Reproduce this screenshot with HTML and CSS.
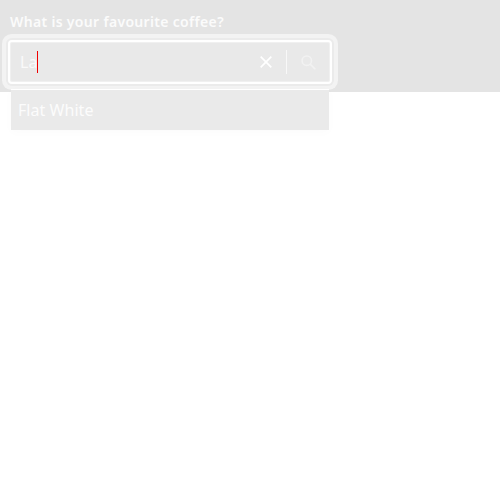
FILE: index.html
```html
<!DOCTYPE html>
<html lang="en">
<head>
<meta charset="utf-8">
<title>Coffee</title>
<link rel="stylesheet" href="styles.css">
</head>
<body>
<div class="panel">
  <div class="label">What is your favourite coffee?</div>
  <div class="field">
    <span class="value">La</span><span class="caret"></span>
    <svg class="clear" width="12" height="12" viewBox="0 0 12 12"><path d="M.7 .7 11.3 11.3M11.3 .7 .7 11.3"/></svg>
    <span class="divider"></span>
    <svg class="search" width="15" height="15" viewBox="0 0 15 15"><circle cx="5.8" cy="5.7" r="4.7"/><path d="M9.2 9.1 14.3 14.2"/></svg>
    <div class="menu"><div class="option">Flat White</div></div>
  </div>
</div>
</body>
</html>
```
FILE: styles.css
```css
html,
body {
  height: 500px;
}
body {
  margin: 0;
  background: #fff;
  font-family: "Noto Sans", sans-serif;
}
.panel {
  box-sizing: border-box;
  height: 92px;
  padding: 12px 8px 0;
  background: #e4e4e4;
}
.label {
  height: 28px;
  margin-left: 2px;
  font-size: 14px;
  font-weight: 600;
  line-height: 20px;
  letter-spacing: 0.32px;
  color: #fbfbfb;
}
.field {
  position: relative;
  box-sizing: border-box;
  display: flex;
  align-items: center;
  width: 324px;
  height: 44px;
  padding: 0 14px 0 10px;
  border: 2px solid #fff;
  border-radius: 4px;
  background: #e9e9e9;
  box-shadow: inset 0 0 0 1px #f0f0f0, 0 0 0 2px #ebebeb, 0 0 0 6px #f3f3f3;
}
.value {
  font-size: 16px;
  line-height: 24px;
  color: #fafafa;
}
.caret {
  width: 1px;
  height: 22px;
  margin-right: auto;
  background: #f00000;
}
.clear {
  margin-right: 14px;
  stroke: #fff;
  stroke-width: 1.7;
}
.divider {
  width: 1px;
  height: 24px;
  margin-right: 14px;
  background: #f8f8f8;
}
.search {
  fill: none;
  stroke: #f2f2f2;
  stroke-width: 1.6;
}
.menu {
  position: absolute;
  top: 47px;
  left: 1px;
  width: 318px;
  border-top: 1px solid #fff;
  background: #eaeaea;
  box-shadow: 0 2px 10px rgba(0, 0, 0, 0.02);
}
.option {
  height: 40px;
  padding-left: 7px;
  font-size: 16px;
  line-height: 40px;
  letter-spacing: 0.04px;
  color: #fcfcfc;
}
```
